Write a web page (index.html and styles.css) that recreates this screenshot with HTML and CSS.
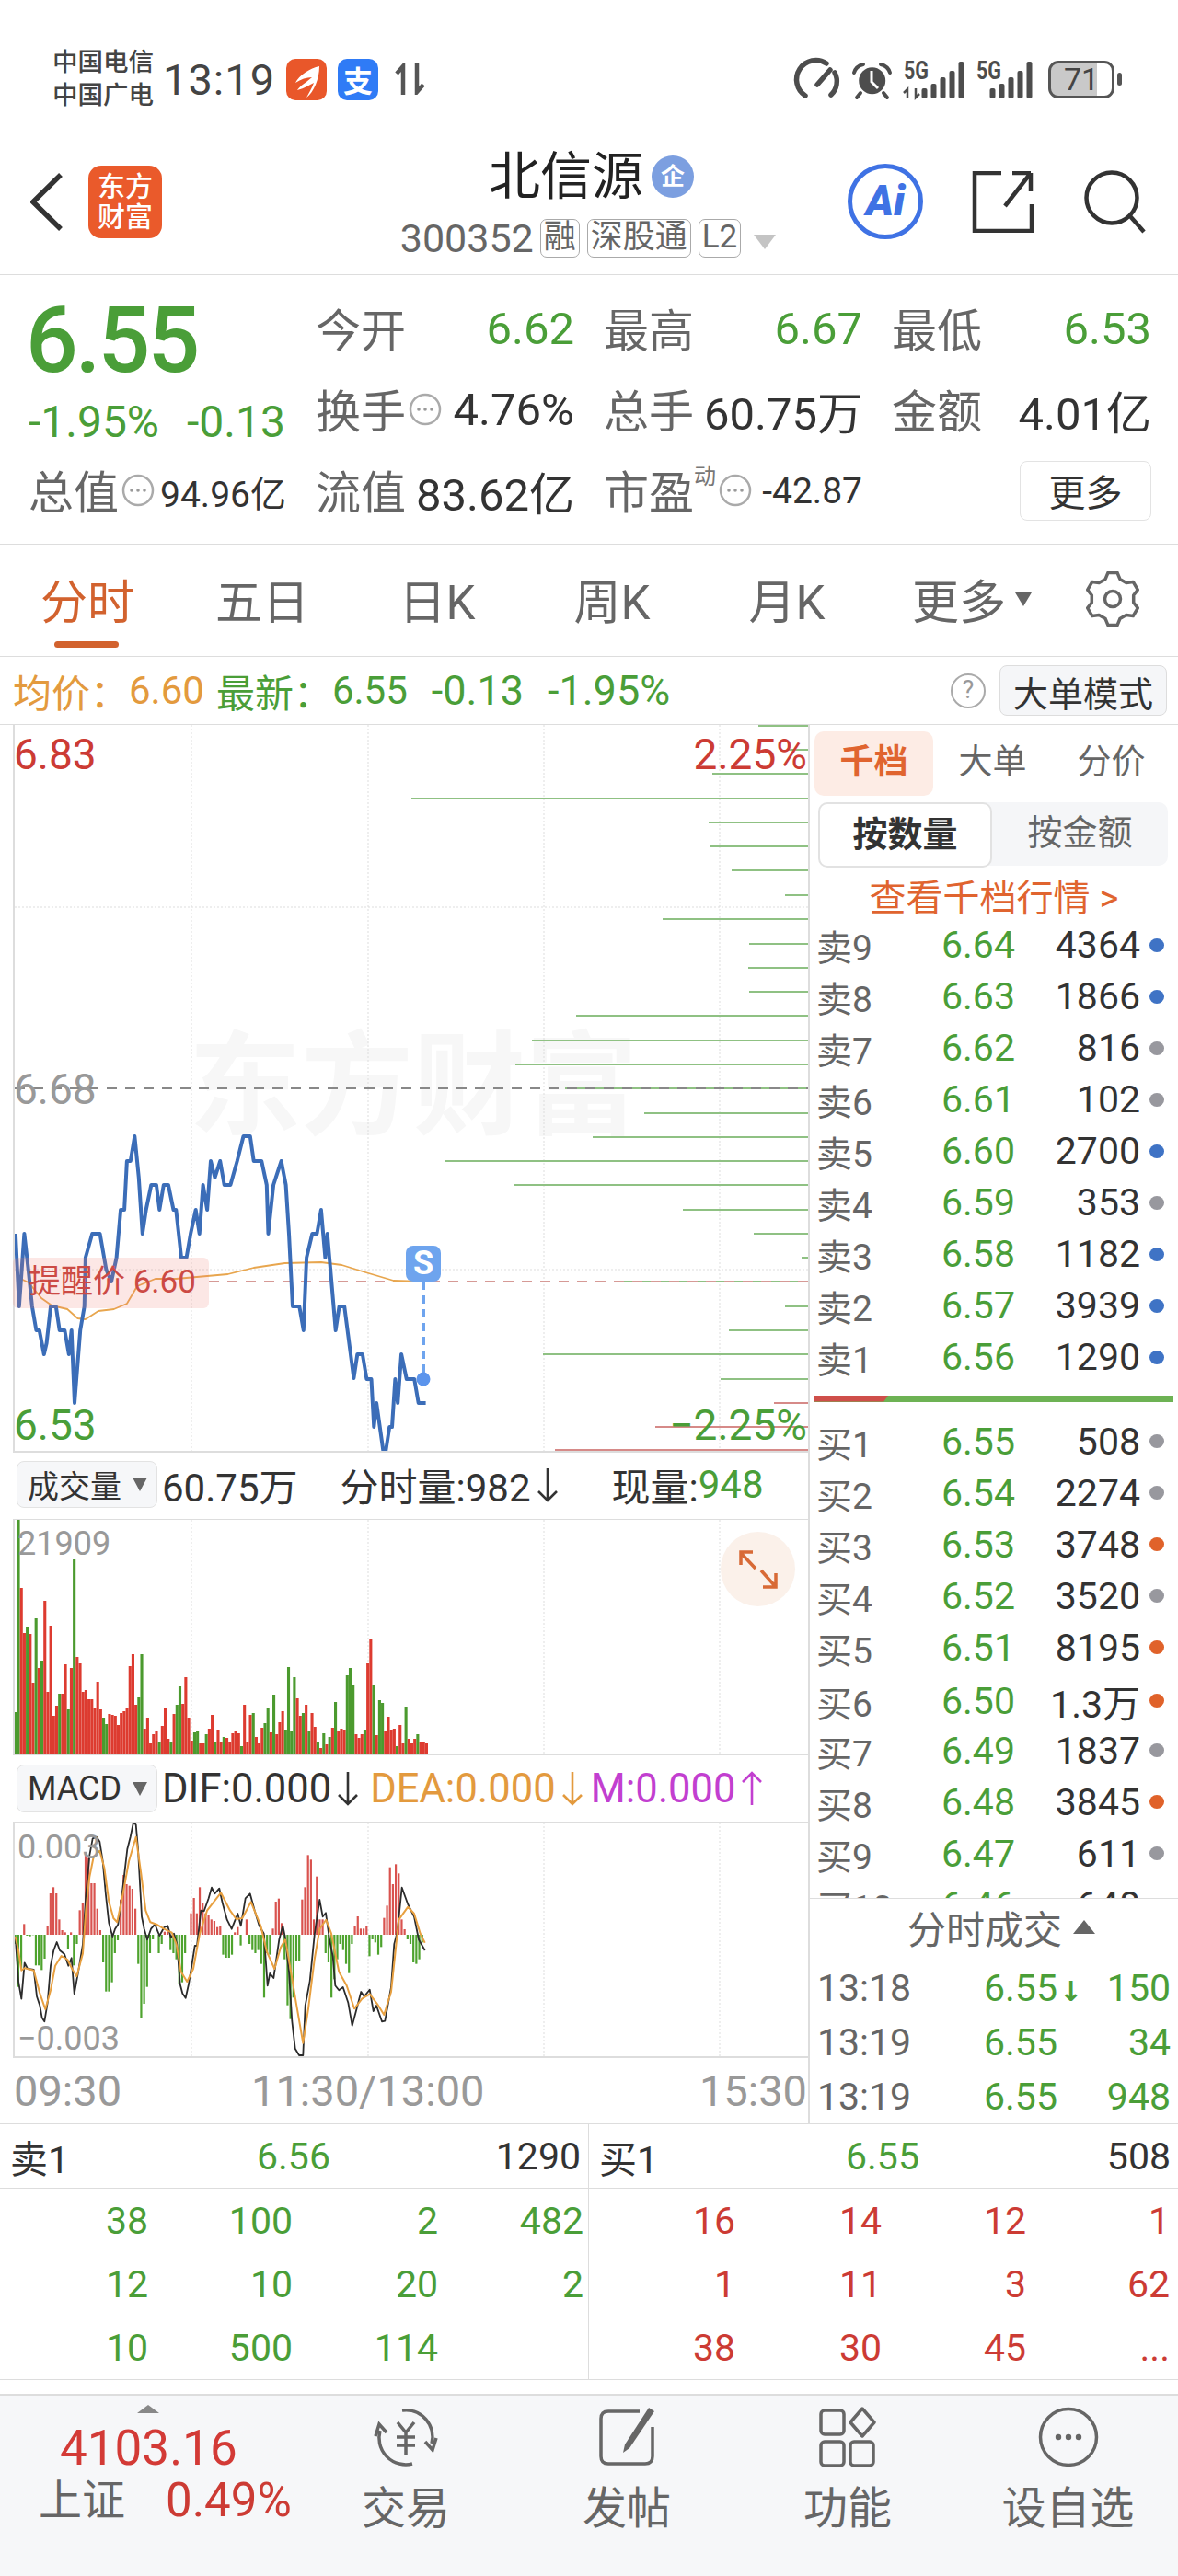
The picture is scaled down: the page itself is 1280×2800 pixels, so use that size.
FILE: index.html
```html
<!DOCTYPE html>
<html lang="zh-CN">
<head>
  <meta charset="UTF-8">
  <meta name="viewport" content="width=device-width, initial-scale=1.0">
  <title>北信源 300352</title>
  <link rel="stylesheet" href="styles.css">
</head>

<body>
  <svg class="sprites" aria-hidden="true">
    <symbol id="i-more" viewBox="0 0 36 36">
      <circle cx="18" cy="18" r="16" fill="none" stroke="#aaa" stroke-width="2.5"/>
      <circle cx="11" cy="18" r="1.8" fill="#999"/><circle cx="18" cy="18" r="1.8" fill="#999"/><circle cx="25" cy="18" r="1.8" fill="#999"/>
    </symbol>
    <symbol id="i-arrow" viewBox="0 0 24 38">
      <path d="M12 1V36M2 26L12 36L22 26" fill="none" stroke="currentColor" stroke-width="2.6"/>
    </symbol>
  </svg>

  <!-- Status bar -->
  <div class="status">
    <div class="carrier">中国电信<br>中国广电</div>
    <div class="clock">13:19</div>
    <div class="app-icon app-orange">
      <svg viewBox="0 0 44 45" width="44" height="45">
        <path d="M36 8C26 10 14 18 10 26C16 22 22 20 28 20C24 24 14 30 12 34C20 32 26 28 30 26C28 32 24 38 22 42C30 36 36 22 36 8Z" fill="#fff"/>
      </svg>
    </div>
    <div class="app-icon app-blue">支</div>
    <svg class="updown" viewBox="0 0 33 34" width="33" height="34">
      <path d="M9 34V3L2 11M24 0V31L31 23" fill="none" stroke="#555" stroke-width="4.5"/>
    </svg>
    <svg class="status-right" viewBox="0 0 275 70" width="275" height="70">
      <g fill="none" stroke="#4d4d4d" stroke-width="5.5" stroke-linecap="round">
        <path d="M23 53A20 20 0 0 1 46 18"/>
        <path d="M55 28A20 20 0 0 1 51 52"/>
        <path d="M36 41L50 25"/>
        <path d="M76 28Q78 21 86 19M115 28Q113 21 105 19M83 50L79 55M108 50L112 55" stroke-width="4"/>
      </g>
      <circle cx="95.7" cy="36.7" r="14.5" fill="#4d4d4d"/>
      <path d="M95 26V38L102 45" fill="none" stroke="#fff" stroke-width="3"/>
      <g class="five-g">
        <text x="130" y="35" textLength="27" lengthAdjust="spacingAndGlyphs">5G</text>
        <text x="209" y="35" textLength="27" lengthAdjust="spacingAndGlyphs">5G</text>
      </g>
      <path d="M134 56V46L130 50M143 45V55L147 51" fill="none" stroke="#4d4d4d" stroke-width="2.5"/>
      <g fill="#4d4d4d">
        <rect x="149.5" y="45" width="6" height="11" rx="2"/><rect x="159.5" y="40" width="6" height="16" rx="2"/><rect x="169.5" y="33" width="6" height="23" rx="2"/><rect x="179.5" y="26" width="6" height="30" rx="2"/><rect x="189.5" y="16" width="6" height="40" rx="2"/>
        <rect x="223.5" y="45" width="6" height="11" rx="2"/><rect x="233.5" y="40" width="6" height="16" rx="2"/><rect x="243.5" y="33" width="6" height="23" rx="2"/><rect x="253.5" y="26" width="6" height="30" rx="2"/><rect x="263.5" y="16" width="6" height="40" rx="2"/>
      </g>
    </svg>
    <div class="battery">71</div>
    <div class="battery-nub"></div>
  </div>

  <!-- Title bar -->
  <header class="nav">
    <div class="nav-left">
      <svg viewBox="0 0 35 63" width="35" height="63">
        <path d="M33 2L3 31.5L33 61" fill="none" stroke="#333" stroke-width="5.5"/>
      </svg>
      <div class="logo">东方<br>财富</div>
    </div>
    <div class="nav-title">
      <div class="stock-name">北信源<span class="badge">企</span></div>
      <div class="stock-sub">
        <span class="stock-code">300352</span>
        <span class="tag">融</span><span class="tag">深股通</span><span class="tag">L2</span>
        <span class="sub-caret"></span>
      </div>
    </div>
    <div class="nav-right">
      <div class="ai">Ai</div>
      <svg viewBox="0 0 67 67" width="67" height="67">
        <path d="M32 2H3V65H65V36M64 2H44M64 2V22M64 2L36 38" fill="none" stroke="#333" stroke-width="4.5"/>
      </svg>
      <svg viewBox="0 0 67 69" width="67" height="69">
        <circle cx="30" cy="30" r="27.5" fill="none" stroke="#333" stroke-width="4.5"/>
        <path d="M50 50L65 67" stroke="#333" stroke-width="4.5"/>
      </svg>
    </div>
  </header>

  <!-- Quote summary -->
  <section class="quote">
    <div class="price-cell">
      <div class="price">6.55</div>
      <div class="change"><span>-1.95%</span><span>-0.13</span></div>
    </div>
    <div class="stat"><span class="label">今开</span><span class="num green">6.62</span></div>
    <div class="stat"><span class="label">最高</span><span class="num green">6.67</span></div>
    <div class="stat"><span class="label">最低</span><span class="num green">6.53</span></div>
    <div class="stat"><span class="label">换手</span><svg class="more"><use href="#i-more"/></svg><span class="num">4.76%</span></div>
    <div class="stat"><span class="label">总手</span><span class="num">60.75万</span></div>
    <div class="stat"><span class="label">金额</span><span class="num">4.01亿</span></div>
    <div class="stat"><span class="label">总值</span><svg class="more"><use href="#i-more"/></svg><span class="num small">94.96亿</span></div>
    <div class="stat"><span class="label">流值</span><span class="num">83.62亿</span></div>
    <div class="stat"><span class="label">市盈</span><span class="sup">动</span><svg class="more"><use href="#i-more"/></svg><span class="num small">-42.87</span></div>
    <div class="stat stat-end"><button class="more-btn">更多</button></div>
  </section>

  <!-- Period tabs -->
  <nav class="tabs">
    <div class="tab active">分时</div>
    <div class="tab">五日</div>
    <div class="tab">日K</div>
    <div class="tab">周K</div>
    <div class="tab">月K</div>
    <div class="tab">更多<span class="tab-caret"></span></div>
    <div class="tab-gear">
      <svg viewBox="0 0 58 60" width="58" height="60">
        <path d="M24 1.4H34L36.9 8.4L43.8 12.4L51.2 11.4L56.3 20.1L51.7 26V34L56.3 39.9L51.2 48.6L43.8 47.6L36.9 51.6L34 58.6H24L21.1 51.6L14.2 47.6L6.8 48.6L1.7 39.9L6.3 34V26L1.7 20.1L6.8 11.4L14.2 12.4L21.1 8.4Z" fill="none" stroke="#666" stroke-width="3.5" stroke-linejoin="round"/>
        <circle cx="29" cy="30" r="8.5" fill="none" stroke="#666" stroke-width="3.5"/>
      </svg>
    </div>
  </nav>

  <!-- Latest line -->
  <div class="latest">
    <span class="orange">均价：</span><span class="orange">6.60</span>
    <span class="green latest-gap">最新：</span><span class="green">6.55</span>
    <span class="green latest-wide">-0.13</span><span class="green latest-wide">-1.95%</span>
    <div class="help">?</div>
    <button class="mode-btn">大单模式</button>
  </div>

  <main class="board">
    <div class="charts">
      <div class="chart chart-price">
        <div class="watermark">东方财富</div>
        <svg id="priceChart" viewBox="16 788 862 789"></svg>
        <span class="axis axis-l red" style="top:7px">6.83</span>
        <span class="axis axis-r red" style="top:7px">2.25%</span>
        <span class="axis axis-l grey" style="top:371px">6.68</span>
        <span class="axis axis-l green" style="top:736px">6.53</span>
        <span class="axis axis-r green" style="top:736px">−2.25%</span>
        <div class="alert-tag">提醒价 6.60</div>
        <div class="s-badge">S</div>
      </div>

      <div class="chart-head head-volume">
        <div class="drop">成交量<span class="drop-caret"></span></div>
        <span class="head-text">60.75万</span>
        <span class="head-text head-gap">分时量:982<svg class="arrow"><use href="#i-arrow"/></svg></span>
        <span class="head-text head-gap2">现量:<span class="green">948</span></span>
      </div>

      <div class="chart chart-volume">
        <svg id="volumeChart" viewBox="16 1652 862 254"></svg>
        <span class="axis-small">21909</span>
        <div class="expand">
          <svg viewBox="0 0 81 81" width="81" height="81">
            <path d="M22 23L38 40M22 36V22H35M60 60L44 42M60 45V60H46" fill="none" stroke="#d86a36" stroke-width="3.5"/>
          </svg>
        </div>
      </div>

      <div class="chart-head">
        <div class="drop drop-macd">MACD<span class="drop-caret"></span></div>
        <span class="head-text macd-text">DIF:0.000<svg class="arrow"><use href="#i-arrow"/></svg></span>
        <span class="head-text macd-text macd-dea">DEA:0.000<svg class="arrow"><use href="#i-arrow"/></svg></span>
        <span class="head-text macd-text macd-m">M:0.000<svg class="arrow arrow-up"><use href="#i-arrow"/></svg></span>
      </div>

      <div class="chart chart-macd">
        <svg id="macdChart" viewBox="16 1981 862 254"></svg>
        <span class="axis-small macd-top">0.003</span>
        <span class="axis-small macd-bottom">−0.003</span>
      </div>

      <div class="time-axis"><span>09:30</span><span>11:30/13:00</span><span class="time-end">15:30</span></div>
    </div>

    <aside class="side">
      <div class="side-scroll">
        <div class="side-tabs">
          <div class="side-tab active">千档</div>
          <div class="side-tab">大单</div>
          <div class="side-tab">分价</div>
        </div>
        <div class="toggle">
          <div class="toggle-item active">按数量</div>
          <div class="toggle-item">按金额</div>
        </div>
        <div class="see-more">查看千档行情 &gt;</div>

        <div class="level"><span class="lv-name">卖9</span><span class="green">6.64</span><span class="lv-vol">4364</span><i class="dot blue"></i></div>
        <div class="level"><span class="lv-name">卖8</span><span class="green">6.63</span><span class="lv-vol">1866</span><i class="dot blue"></i></div>
        <div class="level"><span class="lv-name">卖7</span><span class="green">6.62</span><span class="lv-vol">816</span><i class="dot gray"></i></div>
        <div class="level"><span class="lv-name">卖6</span><span class="green">6.61</span><span class="lv-vol">102</span><i class="dot gray"></i></div>
        <div class="level"><span class="lv-name">卖5</span><span class="green">6.60</span><span class="lv-vol">2700</span><i class="dot blue"></i></div>
        <div class="level"><span class="lv-name">卖4</span><span class="green">6.59</span><span class="lv-vol">353</span><i class="dot gray"></i></div>
        <div class="level"><span class="lv-name">卖3</span><span class="green">6.58</span><span class="lv-vol">1182</span><i class="dot blue"></i></div>
        <div class="level"><span class="lv-name">卖2</span><span class="green">6.57</span><span class="lv-vol">3939</span><i class="dot blue"></i></div>
        <div class="level"><span class="lv-name">卖1</span><span class="green">6.56</span><span class="lv-vol">1290</span><i class="dot blue"></i></div>

        <div class="ratio"><div class="ratio-red"></div></div>

        <div class="level"><span class="lv-name">买1</span><span class="green">6.55</span><span class="lv-vol">508</span><i class="dot gray"></i></div>
        <div class="level"><span class="lv-name">买2</span><span class="green">6.54</span><span class="lv-vol">2274</span><i class="dot gray"></i></div>
        <div class="level"><span class="lv-name">买3</span><span class="green">6.53</span><span class="lv-vol">3748</span><i class="dot orange-dot"></i></div>
        <div class="level"><span class="lv-name">买4</span><span class="green">6.52</span><span class="lv-vol">3520</span><i class="dot gray"></i></div>
        <div class="level"><span class="lv-name">买5</span><span class="green">6.51</span><span class="lv-vol">8195</span><i class="dot orange-dot"></i></div>
        <div class="level"><span class="lv-name">买6</span><span class="green">6.50</span><span class="lv-vol">1.3万</span><i class="dot orange-dot"></i></div>
        <div class="level"><span class="lv-name">买7</span><span class="green">6.49</span><span class="lv-vol">1837</span><i class="dot gray"></i></div>
        <div class="level"><span class="lv-name">买8</span><span class="green">6.48</span><span class="lv-vol">3845</span><i class="dot orange-dot"></i></div>
        <div class="level"><span class="lv-name">买9</span><span class="green">6.47</span><span class="lv-vol">611</span><i class="dot gray"></i></div>
        <div class="level"><span class="lv-name">买10</span><span class="green">6.46</span><span class="lv-vol">648</span><i class="dot gray"></i></div>
      </div>

      <div class="trades">
        <div class="trades-head">分时成交<span class="trades-caret"></span></div>
        <div class="trade"><span class="grey-dark">13:18</span><span class="green">6.55<b class="tick">↓</b></span><span class="green trade-vol">150</span></div>
        <div class="trade"><span class="grey-dark">13:19</span><span class="green">6.55</span><span class="green trade-vol">34</span></div>
        <div class="trade"><span class="grey-dark">13:19</span><span class="green">6.55</span><span class="green trade-vol">948</span></div>
      </div>
    </aside>
  </main>

  <!-- First level queue -->
  <section class="queue">
    <div class="queue-side">
      <div class="queue-head"><span>卖1</span><span class="green">6.56</span><span class="queue-vol">1290</span></div>
      <div class="queue-grid green">
        <span>38</span><span>100</span><span>2</span><span>482</span>
        <span>12</span><span>10</span><span>20</span><span>2</span>
        <span>10</span><span>500</span><span>114</span><span></span>
      </div>
    </div>
    <div class="queue-side">
      <div class="queue-head"><span>买1</span><span class="green">6.55</span><span class="queue-vol">508</span></div>
      <div class="queue-grid red">
        <span>16</span><span>14</span><span>12</span><span>1</span>
        <span>1</span><span>11</span><span>3</span><span>62</span>
        <span>38</span><span>30</span><span>45</span><span>...</span>
      </div>
    </div>
  </section>

  <!-- Bottom bar -->
  <footer class="bottom">
    <div class="ticker">
      <div class="ticker-caret"></div>
      <div class="ticker-value">4103.16</div>
      <div class="ticker-row"><span class="ticker-name">上证</span><span class="ticker-pct">0.49%</span></div>
    </div>
    <div class="bottom-item">
      <svg viewBox="0 0 74 66" width="74" height="66" fill="none" stroke="#666" stroke-width="3.5">
        <path d="M33 4A29 29 0 0 1 65 40M70 34L66 47L58 38M44 62A29 29 0 0 1 9 26M4 32L8 19L16 28"/>
        <path d="M28 17L37 28L46 17M27 33H47M27 42H47M37 28V52"/>
      </svg>
      <span>交易</span>
    </div>
    <div class="bottom-item">
      <svg viewBox="0 0 64 66" width="64" height="66">
        <path d="M46 5H12Q4 5 4 13V54Q4 62 12 62H52Q60 62 60 54V22" fill="none" stroke="#666" stroke-width="3.5"/>
        <polygon points="56,1 62,5 35,45 28,50 30,41" fill="#666"/>
      </svg>
      <span>发帖</span>
    </div>
    <div class="bottom-item">
      <svg viewBox="0 0 62 66" width="62" height="66" fill="none" stroke="#666" stroke-width="3.5">
        <rect x="2" y="4" width="25" height="26" rx="4"/>
        <path d="M47 2L60 17L47 32L34 17Z" stroke-linejoin="round"/>
        <rect x="2" y="38" width="25" height="26" rx="4"/>
        <rect x="34" y="38" width="25" height="26" rx="4"/>
      </svg>
      <span>功能</span>
    </div>
    <div class="bottom-item">
      <svg viewBox="0 0 66 66" width="66" height="66">
        <circle cx="33" cy="33" r="30.5" fill="none" stroke="#666" stroke-width="3.5"/>
        <circle cx="22" cy="33" r="3.2" fill="#666"/><circle cx="33" cy="33" r="3.2" fill="#666"/><circle cx="44" cy="33" r="3.2" fill="#666"/>
      </svg>
      <span>设自选</span>
    </div>
  </footer>

  <script src="chart.js"></script>
</body>
</html>
```

FILE: styles.css
```css
* {
  box-sizing: border-box;
  margin: 0;
  padding: 0;
}

body {
  width: 1280px;
  height: 2800px;
  overflow: hidden;
  background: #fff;
  color: #333;
  font-family: Roboto, "Noto Sans CJK SC", sans-serif;
}

button {
  font-family: inherit;
}

.sprites {
  display: none;
}

/* Shared colours */
.green { color: #4a9e38; }
.red { color: #cc3b34; }
.orange { color: #e39a3e; }
.grey { color: #999; }
.grey-dark { color: #666; }

/* Status bar */
.status {
  height: 140px;
  padding: 32px 0 0 57px;
  display: flex;
  align-items: center;
}

.carrier {
  width: 112px;
  font-size: 27.5px;
  line-height: 36px;
  font-weight: 500;
  color: #444;
}

.clock {
  margin-left: 8px;
  font-size: 47px;
  letter-spacing: 1px;
  color: #444;
}

.app-icon {
  width: 44px;
  height: 45px;
  border-radius: 10px;
  overflow: hidden;
  display: flex;
  align-items: center;
  justify-content: center;
}

.app-orange {
  margin-left: 12px;
  background: #e9572a;
}

.app-blue {
  margin-left: 12px;
  background: #2f7bf6;
  color: #fff;
  font-size: 32px;
  font-weight: 700;
}

.updown {
  margin-left: 18px;
}

.status-right {
  margin-left: auto;
}

.five-g {
  font-size: 28px;
  font-weight: 700;
  fill: #4d4d4d;
}

.battery {
  width: 72px;
  height: 41px;
  margin-left: 12px;
  border: 3px solid #555;
  border-radius: 11px;
  background: linear-gradient(90deg, #c9c9c9 76%, #fff 76%);
  font-size: 34px;
  line-height: 34px;
  text-align: center;
  color: #444;
}

.battery-nub {
  width: 5px;
  height: 14px;
  margin: 0 61px 0 3px;
  border-radius: 3px;
  background: #555;
}

/* Title bar */
.nav {
  height: 159px;
  padding: 0 35px 0 33px;
  border-bottom: 1px solid #ddd;
  display: grid;
  grid-template-columns: 1fr auto 1fr;
  align-items: center;
}

.nav-left {
  display: flex;
  align-items: center;
  gap: 28px;
}

.logo {
  width: 80px;
  height: 79px;
  border-radius: 14px;
  background: #ea5a2b;
  color: #fff;
  font-size: 30px;
  font-weight: 500;
  line-height: 33px;
  padding-top: 6px;
  text-align: center;
}

.nav-title {
  margin-top: 5px;
  display: flex;
  flex-direction: column;
  align-items: center;
}

.stock-name {
  height: 60px;
  font-size: 56px;
  line-height: 60px;
  color: #222;
  display: flex;
  align-items: center;
  padding-left: 7px;
}

.badge {
  width: 46px;
  height: 46px;
  margin-left: 9px;
  border-radius: 50%;
  background: #7c9fe0;
  color: #fff;
  font-size: 26px;
  font-weight: 700;
  line-height: 46px;
  text-align: center;
}

.stock-sub {
  height: 44px;
  margin-top: 15px;
  display: flex;
  align-items: center;
  color: #666;
}

.stock-code {
  font-size: 43px;
  margin-right: 7px;
}

.tag {
  height: 42px;
  margin-right: 8px;
  padding: 0 3px;
  border: 1px solid #aaa;
  border-radius: 7px;
  font-size: 35px;
  line-height: 38px;
}

.sub-caret {
  margin: 8px 0 0 6px;
  border-left: 12px solid transparent;
  border-right: 12px solid transparent;
  border-top: 16px solid #c4c4c4;
}

.nav-right {
  display: flex;
  align-items: center;
  justify-content: flex-end;
  gap: 55px;
}

.ai {
  width: 82px;
  height: 82px;
  margin-right: -2px;
  border: 5px solid #3f72e4;
  border-radius: 50%;
  color: #3f72e4;
  font-size: 46px;
  font-weight: 900;
  font-style: italic;
  line-height: 70px;
  text-align: center;
}

/* Quote summary */
.quote {
  height: 293px;
  padding: 14px 0 0 31px;
  border-bottom: 1px solid #ddd;
  display: grid;
  grid-template-columns: 280px 281px 281px 282px;
  grid-template-rows: repeat(3, 88px);
  column-gap: 32px;
}

.price-cell {
  grid-row: 1 / span 2;
  color: #4a9e38;
}

.price {
  margin-left: -3px;
  font-size: 100px;
  font-weight: 500;
  letter-spacing: -3px;
  line-height: 114px;
}

.change {
  margin-top: 8px;
  display: flex;
  gap: 30px;
  font-size: 48px;
  line-height: 48px;
  white-space: nowrap;
}

.stat {
  display: flex;
  align-items: center;
  justify-content: space-between;
}

.stat-end {
  justify-content: flex-end;
}

.label {
  margin-top: -3px;
  font-size: 49px;
  color: #666;
}

.num {
  margin-top: 1px;
  font-size: 49px;
  white-space: nowrap;
}

.num.green {
  color: #4a9e38;
}

.num.small {
  font-size: 39px;
}

.more {
  width: 36px;
  height: 36px;
  margin: 0 auto 0 3px;
}

.sup {
  align-self: flex-start;
  margin-top: 9px;
  font-size: 24px;
  color: #777;
}

.more-btn {
  width: 143px;
  height: 65px;
  background: #fff;
  border: 1px solid #e3e3e3;
  border-radius: 8px;
  font-size: 40px;
  color: #333;
}

/* Period tabs */
.tabs {
  height: 122px;
  padding-bottom: 3px;
  border-bottom: 1px solid #ddd;
  display: grid;
  grid-template-columns: repeat(5, 190px) 212px 1fr;
}

.tab {
  position: relative;
  display: flex;
  align-items: center;
  justify-content: center;
  font-size: 51px;
  color: #666;
}

.tab.active {
  color: #d2622e;
}

.tab.active::after {
  content: "";
  position: absolute;
  left: 59px;
  bottom: 6px;
  width: 70px;
  height: 7px;
  border-radius: 4px;
  background: #d2622e;
}

.tab-caret {
  margin-left: 10px;
  border-left: 9px solid transparent;
  border-right: 9px solid transparent;
  border-top: 15px solid #666;
}

.tab-gear {
  padding-left: 18px;
  display: flex;
  align-items: center;
}

/* Latest line */
.latest {
  height: 74px;
  padding: 0 12px 0 14px;
  border-bottom: 1px solid #ddd;
  display: flex;
  align-items: center;
  font-size: 42px;
}

.latest-gap {
  margin-left: 13px;
}

.latest-wide {
  margin-left: 26px;
  font-size: 45px;
}

.help {
  width: 38px;
  height: 38px;
  margin-left: auto;
  border: 2.5px solid #aaa;
  border-radius: 50%;
  font-size: 27px;
  line-height: 33px;
  text-align: center;
  color: #999;
}

.mode-btn {
  width: 182px;
  height: 55px;
  margin-left: 15px;
  background: #f5f6f8;
  border: 1px solid #ddd;
  border-radius: 8px;
  font-size: 38px;
  color: #333;
}

/* Main board */
.board {
  height: 1521px;
  border-bottom: 1px solid #ddd;
  display: flex;
}

.charts {
  width: 878px;
  flex: none;
}

.chart {
  position: relative;
  margin-left: 14px;
  border-left: 2px solid #ddd;
  border-bottom: 2px solid #ddd;
}

.chart > svg {
  display: block;
  width: 862px;
}

.chart-price { height: 791px; }
.chart-price > svg { height: 789px; position: relative; }

.chart-volume,
.chart-macd {
  height: 257px;
  border-top: 1px solid #ddd;
}

.chart-volume > svg,
.chart-macd > svg {
  height: 254px;
}

.watermark {
  position: absolute;
  left: 189px;
  top: 319px;
  font-size: 122px;
  line-height: 150px;
  font-weight: 700;
  color: #f7f7f7;
  white-space: nowrap;
}

.axis {
  position: absolute;
  font-size: 46px;
  line-height: 50px;
}

.axis-l { left: -1px; }
.axis-r { right: 1px; }

.alert-tag {
  position: absolute;
  left: -2px;
  top: 579px;
  width: 213px;
  height: 55px;
  padding-left: 17px;
  border-radius: 6px;
  background: rgba(240, 120, 110, 0.18);
  font-size: 35px;
  line-height: 54px;
  color: #cc4a44;
  white-space: nowrap;
}

.s-badge {
  position: absolute;
  left: 425px;
  top: 566px;
  width: 38px;
  height: 39px;
  border-radius: 8px;
  background: #6ea4ee;
  color: #fff;
  font-size: 36px;
  font-weight: 700;
  line-height: 39px;
  text-align: center;
}

.chart-head {
  height: 72px;
  padding-left: 18px;
  display: flex;
  align-items: center;
}

.head-volume {
  padding-bottom: 3px;
}

.drop {
  width: 153px;
  height: 51px;
  margin-right: 5px;
  padding-left: 11px;
  flex: none;
  background: #f6f7f9;
  border: 1px solid #e3e3e3;
  border-radius: 8px;
  display: flex;
  align-items: center;
  font-size: 34px;
  color: #333;
}

.drop-macd {
  font-size: 36px;
  height: 52px;
}

.drop-caret {
  margin-left: 12px;
  border-left: 8.5px solid transparent;
  border-right: 8.5px solid transparent;
  border-top: 15px solid #666;
}

.head-text {
  display: flex;
  align-items: center;
  font-size: 42px;
  color: #333;
  white-space: nowrap;
}

.head-gap { margin-left: 46px; }
.head-gap2 { margin-left: 58px; }

.macd-text { font-size: 43.5px; }
.macd-dea { margin-left: 12px; color: #e39a3e; }
.macd-m { margin-left: 8px; color: #c23fd0; }

.arrow {
  width: 24px;
  height: 38px;
  margin-left: 6px;
}

.arrow-up {
  transform: rotate(180deg);
}

.axis-small {
  position: absolute;
  left: 3px;
  top: 5px;
  font-size: 36px;
  line-height: 42px;
  color: #999;
}

.macd-top { top: 6px; }
.macd-bottom { top: 214px; }

.expand {
  position: absolute;
  left: 767px;
  top: 13px;
  width: 81px;
  height: 81px;
  border-radius: 50%;
  background: #fbf1ea;
}

.time-axis {
  height: 71px;
  padding-left: 15px;
  display: grid;
  grid-template-columns: 258px auto 1fr;
  align-items: center;
  font-size: 47px;
  color: #999;
}

.time-end {
  justify-self: end;
  margin-right: 1px;
}

/* Depth panel */
.side {
  flex: 1;
  min-width: 0;
  border-left: 2px solid #ddd;
  display: flex;
  flex-direction: column;
}

.side-scroll {
  flex: 1;
  min-height: 0;
  overflow: hidden;
  padding-top: 7px;
}

.side-tabs {
  margin-left: 5px;
  display: grid;
  grid-template-columns: repeat(3, 129px);
}

.side-tab {
  height: 70px;
  border-radius: 10px;
  font-size: 37px;
  line-height: 68px;
  text-align: center;
  color: #666;
}

.side-tab.active {
  background: #fdece5;
  color: #e0642f;
  font-weight: 700;
}

.toggle {
  width: 380px;
  height: 69px;
  margin: 7px 0 0 9px;
  border-radius: 10px;
  background: #f5f6f8;
  display: grid;
  grid-template-columns: 189px 1fr;
}

.toggle-item {
  border-radius: 10px;
  font-size: 38px;
  line-height: 67px;
  text-align: center;
  color: #666;
}

.toggle-item.active {
  background: #fff;
  border: 2px solid #e2e2e2;
  color: #333;
  font-weight: 700;
}

.see-more {
  height: 58px;
  padding-top: 13px;
  font-size: 40px;
  line-height: 46px;
  text-align: center;
  color: #e0642f;
}

.level {
  height: 56px;
  padding-left: 7px;
  display: grid;
  grid-template-columns: 136px 80px 136px 26px;
  align-items: center;
  font-size: 41px;
}

.lv-name {
  font-size: 39px;
  color: #666;
}

.lv-vol {
  text-align: right;
  color: #333;
}

.dot {
  width: 16px;
  height: 15px;
  border-radius: 50%;
  justify-self: end;
}

.dot.blue { background: #3f73c5; }
.dot.gray { background: #98989e; }
.dot.orange-dot { background: #e0622a; }

.ratio {
  height: 6.5px;
  margin: 14px 5px 15px;
  background: #6db254;
}

.ratio-red {
  width: 80px;
  height: 100%;
  background: #cf4f4a;
  clip-path: polygon(0 0, 100% 0, 94% 100%, 0 100%);
}

.trades {
  height: 245px;
  flex: none;
  border-top: 1px solid #ddd;
  background: #fff;
}

.trades-head {
  height: 67px;
  padding: 0 0 6px 16px;
  display: flex;
  align-items: center;
  justify-content: center;
  font-size: 42px;
  color: #666;
}

.trades-caret {
  margin-left: 12px;
  border-left: 12px solid transparent;
  border-right: 12px solid transparent;
  border-bottom: 15px solid #666;
}

.trade {
  height: 59px;
  padding: 0 8px;
  display: grid;
  grid-template-columns: 181px 110px 1fr;
  align-items: center;
  font-size: 41px;
}

.tick {
  margin-left: 2px;
  font-family: "DejaVu Sans", sans-serif;
  font-size: 30px;
  font-weight: 700;
}

.trade-vol {
  text-align: right;
}

/* First level queue */
.queue {
  height: 278px;
  border-bottom: 1px solid #ddd;
  display: grid;
  grid-template-columns: 640px 1fr;
  font-size: 41px;
}

.queue-side:first-child {
  border-right: 1px solid #ddd;
}

.queue-head {
  height: 70px;
  padding: 0 8px 0 11px;
  border-bottom: 1px solid #ddd;
  display: grid;
  grid-template-columns: 268px 82px 1fr;
  align-items: center;
}

.queue-vol {
  text-align: right;
}

.queue-grid {
  display: grid;
  grid-template-columns: 161px 157px 158px 158px;
  grid-auto-rows: 69px;
  align-items: center;
  text-align: right;
}

.queue-side + .queue-side .queue-grid {
  grid-template-columns: 159px 159px 157px 156px;
}

/* Bottom bar */
.bottom {
  height: 198px;
  margin-top: 15px;
  border-top: 2px solid #ddd;
  background: #f6f7f9;
  display: grid;
  grid-template-columns: 321px 240px 240px 240px 239px;
}

.ticker-caret {
  width: 24px;
  margin: 10px 0 0 149px;
  border-left: 12px solid transparent;
  border-right: 12px solid transparent;
  border-bottom: 9px solid #888;
}

.ticker-value {
  margin: 8px 0 0 65px;
  font-size: 53px;
  line-height: 60px;
  color: #d33a36;
}

.ticker-row {
  margin-left: 42px;
  display: flex;
  gap: 44px;
  line-height: 54px;
  font-size: 47px;
}

.ticker-name { color: #666; }
.ticker-pct { color: #cc3b34; font-size: 51px; }

.bottom-item {
  padding-top: 12px;
  display: flex;
  flex-direction: column;
  align-items: center;
  font-size: 48px;
  line-height: 60px;
  color: #666;
}

.bottom-item span {
  margin-top: 15px;
}
```

FILE: chart.js
```js
const SVG_NS = 'http://www.w3.org/2000/svg'
const GRID_X = [208, 400, 591, 782]

function add(svg, tag, attrs) {
  const el = document.createElementNS(SVG_NS, tag)
  for (const key in attrs) el.setAttribute(key, attrs[key])
  svg.appendChild(el)
  return el
}

function gridLines(svg, top, bottom) {
  GRID_X.forEach(x => {
    add(svg, 'line', { x1: x, x2: x, y1: top, y2: bottom, stroke: '#ddd', 'stroke-dasharray': '2 2' })
  })
}

function line(svg, points, stroke, width) {
  add(svg, 'polyline', {
    points: points.join(' '),
    fill: 'none',
    stroke,
    'stroke-width': width,
    'stroke-linejoin': 'round'
  })
}

// Flat [x, y, x, y...] list into "x,y" strings
function toPoints(flat, mapX, mapY) {
  const points = []
  for (let i = 0; i < flat.length; i += 2) {
    points.push(mapX(flat[i]).toFixed(1) + ',' + mapY(flat[i + 1]).toFixed(1))
  }
  return points
}

/* Price chart */
const priceChart = document.getElementById('priceChart')
gridLines(priceChart, 788, 1577)

;[986, 1380].forEach(y => {
  add(priceChart, 'line', { x1: 16, x2: 878, y1: y, y2: y, stroke: '#ddd', 'stroke-dasharray': '2 2' })
})

// Order depth bars, [y, left edge]. All end at the right of the chart
const sellDepth = [
  [789, 824], [815, 855], [841, 774], [868, 447], [894, 770], [920, 772], [946, 795], [973, 853],
  [999, 720], [1026, 814], [1052, 813], [1078, 814], [1104, 626], [1131, 578], [1157, 560],
  [1183, 614], [1210, 700], [1236, 644], [1262, 484], [1288, 558], [1315, 742], [1341, 819],
  [1367, 871], [1393, 678], [1420, 853], [1446, 792], [1472, 590], [1499, 783]
]
const buyDepth = [[1525, 841], [1551, 712], [1576, 603]]

sellDepth.forEach(([y, x]) => {
  add(priceChart, 'line', { x1: x, x2: 878, y1: y, y2: y, stroke: '#8fc183', 'stroke-width': 2 })
})
buyDepth.forEach(([y, x]) => {
  add(priceChart, 'line', { x1: x, x2: 878, y1: y, y2: y, stroke: '#d68a88', 'stroke-width': 2 })
})

add(priceChart, 'line', { x1: 16, x2: 878, y1: 1183, y2: 1183, stroke: '#888', 'stroke-width': 2, 'stroke-dasharray': '11 9' })
add(priceChart, 'line', { x1: 227, x2: 878, y1: 1393, y2: 1393, stroke: '#d69a96', 'stroke-width': 2, 'stroke-dasharray': '11 9' })

const avgLine = [
  40, 1390, 55, 1394, 80, 1411, 100, 1419, 130, 1423, 150, 1433, 165, 1434, 190, 1425, 220, 1423,
  245, 1417, 265, 1398, 300, 1390, 340, 1390, 400, 1387, 440, 1385, 490, 1378, 550, 1373, 620, 1372,
  660, 1375, 700, 1382, 760, 1392, 815, 1393
]
const blueLine = [
  30, 1341, 37, 1420, 47, 1341, 55, 1382, 62, 1420, 70, 1446, 76, 1446, 85, 1472, 90, 1460, 98, 1420,
  108, 1420, 115, 1446, 125, 1446, 133, 1472, 138, 1446, 144, 1525, 155, 1446, 163, 1420, 165, 1367,
  178, 1341, 193, 1341, 205, 1380, 215, 1393, 225, 1367, 233, 1315, 240, 1315, 245, 1262, 252, 1262,
  260, 1235, 268, 1280, 275, 1341, 282, 1315, 292, 1288, 302, 1288, 308, 1315, 316, 1288, 325, 1288,
  335, 1315, 340, 1315, 350, 1367, 360, 1367, 368, 1341, 378, 1315, 385, 1341, 392, 1288, 400, 1315,
  407, 1262, 415, 1280, 425, 1262, 433, 1288, 445, 1288, 458, 1262, 470, 1235, 483, 1235, 490, 1262,
  505, 1262, 515, 1288, 518, 1341, 528, 1288, 543, 1262, 552, 1288, 558, 1341, 565, 1420, 578, 1420,
  586, 1446, 592, 1367, 603, 1341, 612, 1341, 620, 1315, 628, 1367, 632, 1341, 640, 1393, 648, 1446,
  655, 1420, 665, 1420, 683, 1498, 690, 1472, 700, 1472, 708, 1499, 717, 1499, 722, 1551, 727, 1525,
  740, 1577, 745, 1577, 752, 1551, 757, 1551, 763, 1499, 768, 1525, 775, 1472, 785, 1499, 800, 1499,
  808, 1525, 822, 1525
]
const zoomX = x => x / 1.777
const same = y => y

line(priceChart, toPoints(avgLine, zoomX, same), '#e8a64e', 1.8)
line(priceChart, toPoints(blueLine, zoomX, same), '#3b6db8', 4)

add(priceChart, 'line', { x1: 460, x2: 460, y1: 1393, y2: 1499, stroke: '#6ea4ee', 'stroke-width': 4, 'stroke-dasharray': '9 6' })
add(priceChart, 'circle', { cx: 460, cy: 1499, r: 7.5, fill: '#5b94ec' })

/* Volume chart. Positive = red, negative = green */
const volumes = [
  -45, -255, 180, 131, -138, 130, 77, -147, 93, -101, 166, 67, 139, 41, 52, -65, 65, 97, -48, 93, -211,
  105, 98, 67, 69, 59, 59, 50, 78, 48, -39, -32, 43, 42, 41, 31, 44, 46, 49, 95, 108, 53, -61, -108, 27,
  39, 11, 21, 24, -13, 30, 49, 16, -13, 43, -53, -73, 54, 83, 39, 14, -23, -24, 11, 11, -21, 27, 42, -12,
  26, 12, -18, 17, 13, 22, 24, 22, -8, 53, 13, 42, -44, 18, 11, 28, -33, -49, 23, -64, 21, 34, 46, -26,
  -94, -24, -83, 60, 41, -44, 53, -24, 44, 29, -12, 6, -22, 10, -18, 28, -56, 24, 27, 26, -85, -93, -75,
  21, 17, 21, -26, 98, 125, -75, 20, -58, -55, 24, 40, 26, 27, -8, 31, 11, -51, 16, 11, 16, -21, 12, 13, 11
]
const volumeChart = document.getElementById('volumeChart')
gridLines(volumeChart, 1652, 1906)

volumes.forEach((value, i) => {
  const h = Math.abs(value)
  add(volumeChart, 'rect', {
    x: (15.3 + i * 3.19).toFixed(2),
    y: 1906 - h,
    width: 3.1,
    height: h,
    fill: value > 0 ? '#dd3b30' : '#4b9a2e'
  })
})

/* MACD chart. Values were read off a 3x crop, so they are scaled down here */
const macdBars = [
  -30, -170, -110, 35, -3, -5, -1, -100, -100, -115, -78, 30, 135, 155, 135, 50, 15, 8, -48, 8, -100, -30,
  80, 105, 265, 250, 168, 168, 85, 15, -90, -185, -185, -155, -60, -18, 115, 195, 165, 160, 150, 85, -95,
  -270, -225, -170, -60, -15, 0, -60, -30, 10, 10, -50, -60, -80, -160, -155, -60, 0, 70, 120, 70, 155,
  105, 70, 65, 50, 45, 25, 30, -65, -75, -75, -65, 8, 25, -35, 0, 50, -30, -50, -60, -50, -95, -205, -60,
  -65, 20, 108, 118, 38, -80, -230, -275, -205, -85, -85, 115, 155, 260, 245, 50, 190, 50, 50, -60, -90,
  -205, -145, -80, -30, -50, -95, -125, -30, 30, 60, 20, 20, 30, -70, -15, -25, -65, -40, 55, 95, 220,
  165, 230, 200, 50, 18, -15, -30, -90, -95, -80, -25
]
const difLine = [
  20, 375, 30, 520, 40, 578, 50, 460, 60, 480, 80, 483, 90, 570, 100, 600, 107, 640, 115, 652, 125, 590,
  135, 470, 145, 420, 155, 393, 165, 420, 180, 432, 193, 470, 203, 445, 212, 562, 225, 490, 240, 400,
  250, 240, 262, 110, 272, 55, 285, 50, 295, 65, 305, 130, 315, 240, 325, 330, 337, 375, 345, 350, 355, 335,
  370, 220, 385, 90, 395, 50, 405, 2, 413, 10, 420, 90, 432, 310, 440, 350, 450, 385, 462, 350, 475, 335,
  490, 372, 505, 345, 517, 340, 527, 378, 537, 365, 547, 400, 557, 530, 565, 560, 575, 575, 585, 530,
  595, 470, 605, 405, 612, 405, 625, 290, 635, 292, 650, 250, 660, 215, 670, 235, 685, 218, 695, 265,
  710, 320, 725, 350, 745, 300, 755, 340, 770, 250, 785, 235, 800, 290, 815, 340, 830, 365, 842, 535,
  850, 495, 862, 510, 880, 385, 892, 340, 900, 380, 912, 490, 922, 650, 932, 740, 945, 762, 958, 762,
  965, 600, 980, 520, 995, 370, 1012, 255, 1022, 310, 1032, 298, 1045, 390, 1055, 440, 1063, 535, 1075, 550,
  1088, 540, 1105, 590, 1118, 665, 1130, 620, 1147, 555, 1157, 570, 1175, 548, 1187, 618, 1197, 600,
  1215, 652, 1225, 650, 1245, 540, 1255, 400, 1265, 360, 1280, 215, 1300, 270, 1320, 310, 1335, 385, 1355, 420
]
const deaLine = [
  20, 375, 30, 420, 40, 485, 50, 478, 80, 485, 100, 560, 118, 612, 135, 550, 150, 470, 170, 438, 190, 450,
  205, 480, 220, 505, 240, 430, 250, 290, 262, 180, 275, 115, 295, 95, 310, 150, 325, 260, 340, 315, 352, 328,
  370, 240, 390, 130, 413, 50, 430, 170, 445, 290, 460, 328, 480, 335, 505, 350, 530, 362, 545, 400, 560, 490,
  580, 522, 600, 480, 620, 370, 645, 290, 690, 232, 720, 290, 740, 318, 760, 315, 788, 262, 820, 340, 840, 425,
  865, 480, 885, 410, 900, 385, 915, 470, 935, 590, 958, 722, 975, 610, 995, 450, 1012, 350, 1033, 320,
  1050, 365, 1075, 490, 1100, 535, 1125, 610, 1150, 578, 1175, 562, 1200, 595, 1222, 630, 1245, 555,
  1270, 320, 1300, 278, 1320, 300, 1340, 365, 1355, 395
]
const macdChart = document.getElementById('macdChart')
gridLines(macdChart, 1981, 2235)

macdBars.forEach((value, i) => {
  const h = Math.abs(value) / 3
  add(macdChart, 'rect', {
    x: (16.7 + i * 3.18 - 1.1).toFixed(2),
    y: value > 0 ? 2103 - h : 2103,
    width: 2.2,
    height: h,
    fill: value > 0 ? '#d9534f' : '#4ea32e'
  })
})

const macdX = x => 10 + x / 3
const macdY = y => 1980 + y / 3
line(macdChart, toPoints(difLine, macdX, macdY), '#2b2b2b', 1.8)
line(macdChart, toPoints(deaLine, macdX, macdY), '#e8a040', 2)
```
